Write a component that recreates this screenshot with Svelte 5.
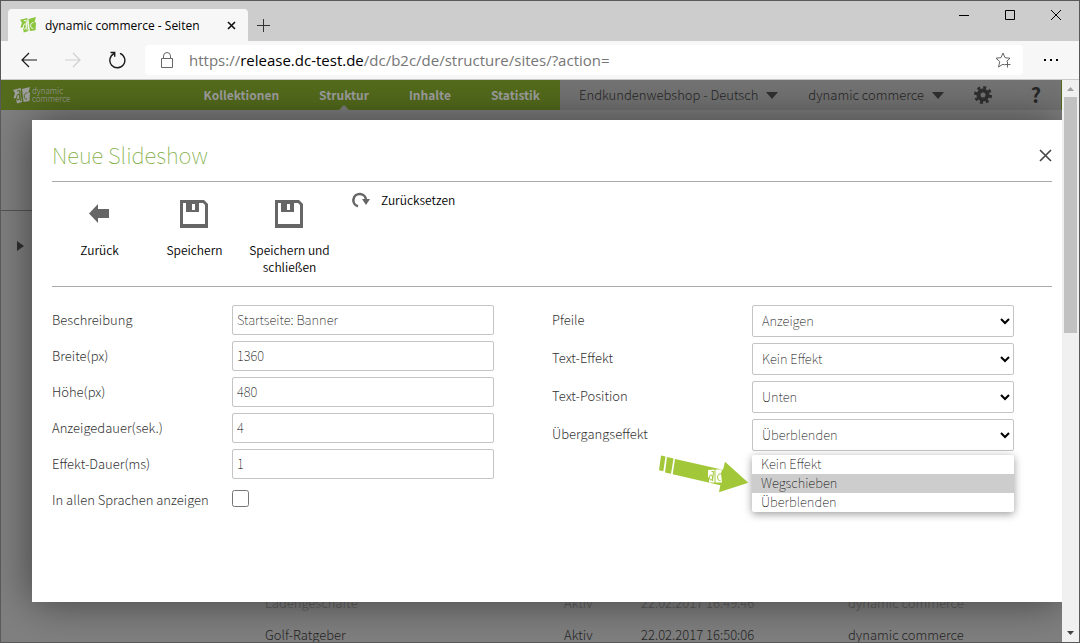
<script lang="ts">
  const nav = ['Kollektionen', 'Struktur', 'Inhalte', 'Statistik']

  const fields = [
    { id: 'beschreibung', label: 'Beschreibung', value: 'Startseite: Banner' },
    { id: 'breite', label: 'Breite(px)', value: '1360' },
    { id: 'hoehe', label: 'Höhe(px)', value: '480' },
    { id: 'anzeigedauer', label: 'Anzeigedauer(sek.)', value: '4' },
    { id: 'effektdauer', label: 'Effekt-Dauer(ms)', value: '1' },
  ]

  const effects = ['Kein Effekt', 'Wegschieben', 'Überblenden']

  const selects = [
    { id: 'pfeile', label: 'Pfeile', value: 'Anzeigen' },
    { id: 'texteffekt', label: 'Text-Effekt', value: 'Kein Effekt' },
    { id: 'textposition', label: 'Text-Position', value: 'Unten' },
  ]

  const rows = [
    { name: 'Ladengeschäfte', status: 'Aktiv', date: '22.02.2017 16:49:46', user: 'dynamic commerce', faded: true },
    { name: 'Golf-Ratgeber', status: 'Aktiv', date: '22.02.2017 16:50:06', user: 'dynamic commerce', faded: false },
  ]

  let highlighted = $state('Wegschieben')
</script>

{#snippet mark()}
  <path d="M0 3l8-2-.5 4L9 15l-5 1.500L3 11 .5 11.500 2 6z" />
  <path d="M9 2l8-2-1.500 5 1.500 1-.5 8-6 1z" />
  <g class="hole">
    <ellipse cx="5.200" cy="10" rx="1.500" ry="2.800" transform="rotate(8 5 10)" />
    <path d="M4 4l2.500-.5 1 10.500" />
    <path d="M14.500 6c-4-1-4.500 7-.5 6" />
  </g>
{/snippet}

{#snippet disk()}
  <svg width="28" height="28" viewBox="0 0 28 28" aria-hidden="true">
    <path fill-rule="evenodd" d="M0 0h24l4 4v24H0zM3 3v21h22V5l-2-2h-4v9H6V3zM12 4v6h3V4z" />
  </svg>
{/snippet}

<div class="window">
  <!-- Browser chrome -->
  <div class="titlebar">
    <div class="tab">
      <svg class="favicon" width="16" height="16" viewBox="0 0 17 17" aria-hidden="true">{@render mark()}</svg>
      <span class="tab-title">dynamic commerce - Seiten</span>
      <button class="plain" aria-label="Tab schließen">
        <svg width="9" height="9" viewBox="0 0 9 9"><path d="M1 1l7 7M8 1l-7 7" stroke="#111" stroke-width="1.6" /></svg>
      </button>
    </div>
    <button class="plain new-tab" aria-label="Neuer Tab">
      <svg width="13" height="13" viewBox="0 0 13 13"><path d="M6.5 0v13M0 6.5h13" stroke="#333" /></svg>
    </button>
    <div class="window-buttons">
      <button class="plain" aria-label="Minimieren">
        <svg width="10" height="10" viewBox="0 0 10 10"><path d="M0 5.5h10" stroke="#000" /></svg>
      </button>
      <button class="plain" aria-label="Maximieren">
        <svg width="10" height="10" viewBox="0 0 10 10"><path d="M.5.5h9v9h-9z" fill="none" stroke="#000" /></svg>
      </button>
      <button class="plain" aria-label="Schließen">
        <svg width="10" height="10" viewBox="0 0 10 10"><path d="M0 0l10 10M10 0L0 10" stroke="#000" /></svg>
      </button>
    </div>
  </div>

  <div class="toolbar">
    <button class="plain" aria-label="Zurück">
      <svg width="16" height="16" viewBox="0 0 16 16" fill="none" stroke="#1a1a1a" stroke-width="1.2"><path d="M16 8H1M8 1L1 8l7 7" /></svg>
    </button>
    <button class="plain" aria-label="Vorwärts" disabled>
      <svg width="16" height="16" viewBox="0 0 16 16" fill="none" stroke="#cfcfcf" stroke-width="1.2"><path d="M0 8h15M8 1l7 7-7 7" /></svg>
    </button>
    <button class="plain" aria-label="Aktualisieren">
      <svg width="18" height="18" viewBox="0 0 18 18" fill="none" stroke="#1a1a1a" stroke-width="1.4">
        <path d="M11 2.3A7.5 7.5 0 1 1 5 2.6M1.5 1.5h4.2v4.2" />
      </svg>
    </button>
    <div class="address">
      <svg width="14" height="17" viewBox="0 0 14 17" fill="none" stroke="#666" aria-hidden="true">
        <path d="M1.5 6.5h11v9h-11zM3.5 6.5V4a3.5 3.5 0 0 1 7 0v2.500" />
      </svg>
      <span class="url">https://<b>release.dc-test.de</b>/dc/b2c/de/structure/sites/?action=</span>
      <button class="plain" aria-label="Zu Favoriten hinzufügen">
        <svg width="17" height="17" viewBox="0 0 17 17" fill="none" stroke="#666">
          <path d="M11.500 9.500L15 6.200l-5-.5L8 1 6 5.700l-5 .5 3.800 3.500L3.500 15 8 12.200l1.500 1M12.500 9.500v6M9.500 12.500h6" />
        </svg>
      </button>
    </div>
    <button class="plain" aria-label="Mehr">
      <svg width="14" height="2" viewBox="0 0 14 2"><path d="M0 0h2v2H0zM6 0h2v2H6zM12 0h2v2h-2z" /></svg>
    </button>
  </div>

  <div class="viewport">
    <div class="page">
      <!-- Dimmed page behind the dialog -->
      <header class="site-header">
        <div class="brand-bar">
          <div class="logo">
            <svg width="17" height="17" viewBox="0 0 17 17" aria-hidden="true">{@render mark()}</svg>
            <span>dynamic<br />commerce</span>
          </div>
          <nav>
            {#each nav as item}
              <a href="#{item}" class:current={item === 'Struktur'}>{item}</a>
            {/each}
          </nav>
        </div>
        <div class="account-bar">
          <button class="plain menu">Endkundenwebshop - Deutsch <i class="caret"></i></button>
          <button class="plain menu">dynamic commerce <i class="caret"></i></button>
          <button class="plain" aria-label="Einstellungen">
            <svg width="18" height="18" viewBox="0 0 18 18" fill="none" stroke="#303030">
              <circle cx="9" cy="9" r="4.500" stroke-width="4" />
              <circle cx="9" cy="9" r="7.500" stroke-width="3" stroke-dasharray="2.950 2.940" />
            </svg>
          </button>
          <button class="plain help" aria-label="Hilfe">?</button>
        </div>
      </header>

      <div class="site-body">
        <aside>
          <div class="tree-head"></div>
          <button class="plain expand" aria-label="Seitenbaum öffnen">
            <svg width="7" height="10" viewBox="0 0 7 10"><path d="M0 0l7 5-7 5z" fill="#303030" /></svg>
          </button>
        </aside>
        <table>
          <tbody>
            {#each rows as row}
              <tr class:faded={row.faded}>
                <td class="name">{row.name}</td>
                <td class="status">{row.status}</td>
                <td class="date">{row.date}</td>
                <td>{row.user}</td>
              </tr>
            {/each}
          </tbody>
        </table>
      </div>

      <!-- Dialog -->
      <div class="dialog" role="dialog" aria-labelledby="dialog-title">
        <div class="dialog-head">
          <h1 id="dialog-title">Neue Slideshow</h1>
          <button class="plain" aria-label="Dialog schließen">
            <svg width="13" height="13" viewBox="0 0 13 13"><path d="M1 1l11 11M12 1L1 12" stroke="#444" stroke-width="1.6" /></svg>
          </button>
        </div>

        <div class="actions">
          <button class="plain action">
            <span class="icon">
              <svg width="20" height="19" viewBox="0 0 20 19"><path d="M0 9.500L9 0v5h11v9H9v5z" /></svg>
            </span>
            Zurück
          </button>
          <button class="plain action"><span class="icon">{@render disk()}</span>Speichern</button>
          <button class="plain action"><span class="icon">{@render disk()}</span>Speichern und schließen</button>
          <button class="plain reset">
            <svg width="18" height="16" viewBox="0 0 18 16">
              <path d="M6 14.300A6.300 6.300 0 1 1 14 8" fill="none" stroke="#666" stroke-width="2.600" />
              <path d="M10 7h8l-4 6z" />
            </svg>
            Zurücksetzen
          </button>
        </div>

        <form>
          <div class="column">
            {#each fields as field}
              <div class="row">
                <label for={field.id}>{field.label}</label>
                <input type="text" id={field.id} value={field.value} />
              </div>
            {/each}
            <div class="row">
              <label for="sprachen">In allen Sprachen anzeigen</label>
              <input type="checkbox" id="sprachen" />
            </div>
          </div>

          <div class="column wide">
            {#each selects as select}
              <div class="row">
                <label for={select.id}>{select.label}</label>
                <select id={select.id}><option>{select.value}</option></select>
              </div>
            {/each}
            <div class="row">
              <label for="uebergang">Übergangseffekt</label>
              <div class="dropdown">
                <select id="uebergang" value="Überblenden">
                  {#each effects as effect}
                    <option>{effect}</option>
                  {/each}
                </select>
                <ul role="listbox" aria-label="Übergangseffekt">
                  {#each effects as effect}
                    <li
                      role="option"
                      aria-selected={effect === highlighted}
                      class:highlighted={effect === highlighted}
                      onmouseenter={() => (highlighted = effect)}
                    >{effect}</li>
                  {/each}
                </ul>
                <svg class="pointer" width="92" height="40" viewBox="0 0 92 40" aria-hidden="true">
                  <path d="M3 .5l4.500 1L5.300 16.300 1 15.300zM9 2l6.500 1.500L13 18.800 7 17.500zM17 4l48 10.700 2-8 23.300 21L61 37.300l1.300-7L14.700 19.300z" />
                  <path class="emblem" d="M50 15l6.500-.5v13H51v-5h-1zM57.500 14.500h6.500l-1 4 1 9h-6.500z" />
                  <g class="emblem-lines">
                    <ellipse cx="53" cy="22.500" rx="1.600" ry="2.600" />
                    <path d="M53.500 16.500h2L54.500 26M63.500 19c-5-2-5 8-1 6.500" />
                  </g>
                </svg>
              </div>
            </div>
          </div>
        </form>
      </div>
    </div>

    <div class="scrollbar" aria-hidden="true">
      <svg width="7" height="4" viewBox="0 0 7 4"><path d="M0 4l3.500-4L7 4z" fill="#a0a0a0" /></svg>
      <div class="thumb"></div>
      <svg width="7" height="4" viewBox="0 0 7 4"><path d="M0 0l3.500 4L7 0z" fill="#444" /></svg>
    </div>
  </div>
</div>

<style>
  :global(body) {
    margin: 0;
  }

  .window {
    display: flex;
    flex-direction: column;
    height: 100vh;
    box-sizing: border-box;
    border: 1px solid #5a5859;
    overflow: hidden;
    font-family: 'Noto Sans CJK SC', 'Noto Sans', sans-serif;
    font-size: 13px;
    line-height: 17px;
  }

  .plain {
    display: inline-flex;
    align-items: center;
    justify-content: center;
    padding: 0;
    border: 0;
    background: none;
    color: inherit;
    font: inherit;
    cursor: pointer;
  }

  svg {
    display: block;
    flex-shrink: 0;
  }

  /* Browser chrome */
  .titlebar {
    display: flex;
    height: 40px;
    background: #cdcdcd;
    font-family: 'Open Sans', sans-serif;
    font-size: 12px;
  }

  .tab {
    display: flex;
    align-items: center;
    box-sizing: border-box;
    width: 240px;
    margin: 8px 0 0 7px;
    padding: 0 12px;
    border-radius: 4px 4px 0 0;
    background: #f7f7f7;
  }

  .favicon {
    fill: #8cc63f;
  }

  .hole {
    fill: none;
    stroke: #f7f7f7;
  }

  .tab-title {
    flex: 1;
    margin-left: 9px;
    white-space: nowrap;
  }

  .new-tab {
    margin: 8px 0 0 9px;
  }

  .window-buttons {
    display: flex;
    gap: 36px;
    height: 28px;
    margin: 0 18px 0 auto;
  }

  .toolbar {
    display: flex;
    align-items: center;
    gap: 28px;
    height: 38px;
    padding: 0 21px 0 20px;
    border-bottom: 1px solid #c9c9c9;
    background: #f7f7f7;
  }

  .address {
    display: flex;
    flex: 1;
    align-items: center;
    height: 30px;
    margin: 0 -7px 0 -10px;
    padding: 0 11px 0 15px;
    border-radius: 4px;
    background: #fff;
    font-family: 'Open Sans', sans-serif;
    font-size: 15px;
    color: #767676;
  }

  .url {
    flex: 1;
    margin-left: 15px;
    white-space: nowrap;
  }

  .url b {
    font-weight: 400;
    color: #000;
  }

  .viewport {
    display: flex;
    flex: 1;
    min-height: 0;
  }

  .page {
    position: relative;
    flex: 1;
    min-width: 0;
    overflow: hidden;
    background: #808080;
    color: #262626;
  }

  /* Dimmed page */
  .site-header {
    display: flex;
    height: 30px;
    border-right: 1px solid #546c1c;
  }

  .brand-bar {
    display: flex;
    flex: 0 0 559px;
    justify-content: space-between;
    background: #546c1c;
    color: #a0a0a0;
  }

  .logo {
    display: flex;
    align-items: center;
    gap: 2px;
    padding-left: 12px;
    fill: #a0a0a0;
    font-size: 8px;
    font-weight: 300;
    line-height: 8px;
  }

  .logo .hole {
    fill: none;
    stroke: #546c1c;
  }

  nav {
    display: flex;
  }

  nav a {
    position: relative;
    padding: 0 20px;
    color: inherit;
    font-size: 12px;
    font-weight: 700;
    line-height: 30px;
    text-decoration: none;
  }

  .current::after {
    content: '';
    position: absolute;
    bottom: 0;
    left: 50%;
    margin-left: -5px;
    border: 5px solid transparent;
    border-top: 0;
    border-bottom-color: #808080;
  }

  .account-bar {
    display: flex;
    flex: 1;
    align-items: center;
    gap: 30px;
    padding: 0 20px 0 19px;
    background: #747474;
    font-weight: 300;
    line-height: 30px;
  }

  .menu {
    gap: 8px;
  }

  .caret {
    border: 6px solid transparent;
    border-top: 7px solid #303030;
    border-bottom: 0;
  }

  .help {
    margin-left: auto;
    font-size: 20px;
    font-weight: 700;
  }

  .site-body {
    display: flex;
    align-items: flex-start;
  }

  aside {
    width: 264px;
  }

  .tree-head {
    height: 100px;
    border-bottom: 1px solid #555;
  }

  .expand {
    margin: 30px 0 0 16px;
  }

  table {
    flex: 1;
    margin-top: 476px;
    border-collapse: collapse;
    font-weight: 300;
  }

  td {
    height: 32px;
    padding: 0;
  }

  .name {
    width: 299px;
  }

  .status {
    width: 77px;
  }

  .date {
    width: 207px;
  }

  .faded {
    color: #5a5a5a;
  }

  /* Dialog */
  .dialog {
    position: absolute;
    top: 40px;
    right: 0;
    left: 31px;
    box-sizing: border-box;
    padding: 0 10px 87px 20px;
    background: #fff;
    box-shadow: 0 0 40px rgba(0, 0, 0, 0.5);
    color: #000;
  }

  .dialog svg {
    fill: #666;
  }

  .dialog-head {
    display: flex;
    align-items: center;
    justify-content: space-between;
    height: 61px;
    border-bottom: 1px solid #aaa;
  }

  h1 {
    margin: 6px 0 0;
    color: #7fae45;
    font-size: 22px;
    font-weight: 100;
    line-height: 30px;
  }

  .dialog-head button {
    margin-top: 10px;
  }

  .actions {
    display: flex;
    align-items: flex-start;
    height: 104px;
    border-bottom: 1px solid #aaa;
    font-size: 12px;
    font-weight: 350;
  }

  .action {
    flex-direction: column;
    width: 95px;
    line-height: 17px;
  }

  .icon {
    display: flex;
    align-items: center;
    box-sizing: border-box;
    height: 59px;
    padding: 4px 2px 0 0;
  }

  .reset {
    gap: 11px;
    margin: 9px 0 0 15px;
  }

  form {
    display: grid;
    grid-template-columns: 1fr 1fr;
    padding-top: 18px;
  }

  .column {
    display: flex;
    flex-direction: column;
    gap: 6px;
  }

  .row {
    display: grid;
    grid-template-columns: 180px 262px;
    align-items: center;
    min-height: 30px;
  }

  .wide .row {
    grid-template-columns: 200px 262px;
  }

  label {
    padding-bottom: 2px;
    color: #333;
    font-weight: 300;
  }

  .wide label {
    padding-bottom: 3px;
  }

  input,
  select {
    box-sizing: border-box;
    border: 1px solid #c4c4c4;
    border-radius: 2px;
    background: #fff;
    color: #000;
    font: inherit;
    font-weight: 100;
  }

  input[type='text'] {
    height: 30px;
    padding: 0 5px 2px 4px;
  }

  input[type='checkbox'] {
    width: 17px;
    height: 17px;
    margin: 0 0 4px;
  }

  select {
    width: 100%;
    height: 32px;
    padding: 0 0 2px 5px;
  }

  .dropdown {
    position: relative;
  }

  ul {
    position: absolute;
    top: 36px;
    right: 0;
    left: 0;
    margin: 0;
    padding: 0;
    border-radius: 2px;
    background: #fff;
    box-shadow: 0 2px 8px rgba(0, 0, 0, 0.4);
    font-weight: 100;
    list-style: none;
  }

  li {
    height: 19px;
    padding-left: 9px;
    line-height: 17px;
  }

  .highlighted {
    background: #cdcdcd;
  }

  .dialog .pointer {
    position: absolute;
    top: 36px;
    left: -94px;
    fill: #a2c83a;
  }

  .dialog .emblem {
    fill: #fff;
  }

  .emblem-lines {
    fill: none;
    stroke: #a2c83a;
  }

  .scrollbar {
    display: flex;
    flex-direction: column;
    align-items: center;
    box-sizing: border-box;
    width: 17px;
    padding: 7px 0;
    background: #f0f0f0;
  }

  .thumb {
    width: 13px;
    height: 43%;
    margin: 6px 0 auto;
    background: #c1c1c1;
  }
</style>
